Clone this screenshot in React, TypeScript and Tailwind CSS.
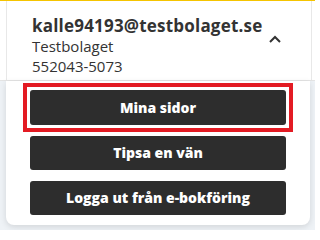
export default function App() {
  const buttons = ["Mina sidor", "Tipsa en vän", "Logga ut från e-bokföring"];
  const btn =
    "h-[34px] w-full rounded-[3px] bg-[#2d2d2d] text-white text-[14px] leading-none font-extrabold";
  return (
    <div className="w-[315px] h-[230px] bg-[#eef2f6] overflow-hidden font-['Open_Sans',sans-serif] text-[#333333]">
      <header className="h-[81px] bg-white border-t border-t-[#f5c400] border-b border-b-[#e4e4e4] pl-[6px]">
        <div className="w-[306px] h-full border-x border-[#e8e8e8] flex items-start justify-between pl-[25px] pr-[30px] pt-[15px]">
          <div className="text-[15px] leading-[20px]">
            <p className="font-bold text-[17px] tracking-[0.2px]">kalle94193@testbolaget.se</p>
            <p>Testbolaget</p>
            <p>552043-5073</p>
          </div>
          <svg width="12" height="8" viewBox="0 0 12 8" className="mt-[19px]" fill="none">
            <path d="M1 7 L6 2 L11 7" stroke="#333333" strokeWidth="2" />
          </svg>
        </div>
      </header>
      <div className="ml-[6px] w-[304px] bg-white rounded-b-lg shadow-[0_2px_6px_rgba(0,0,0,0.12)] px-[24px] pt-[9px] pb-[10px] flex flex-col gap-[11px]">
        {buttons.map((label, i) =>
          i === 0 ? (
            <div key={label} className="-m-[7px] border-4 border-[#e31b23] p-[3px]">
              <button className={btn + " block h-[35px]"}>{label}</button>
            </div>
          ) : (
            <button key={label} className={btn}>
              {label}
            </button>
          )
        )}
      </div>
    </div>
  );
}
